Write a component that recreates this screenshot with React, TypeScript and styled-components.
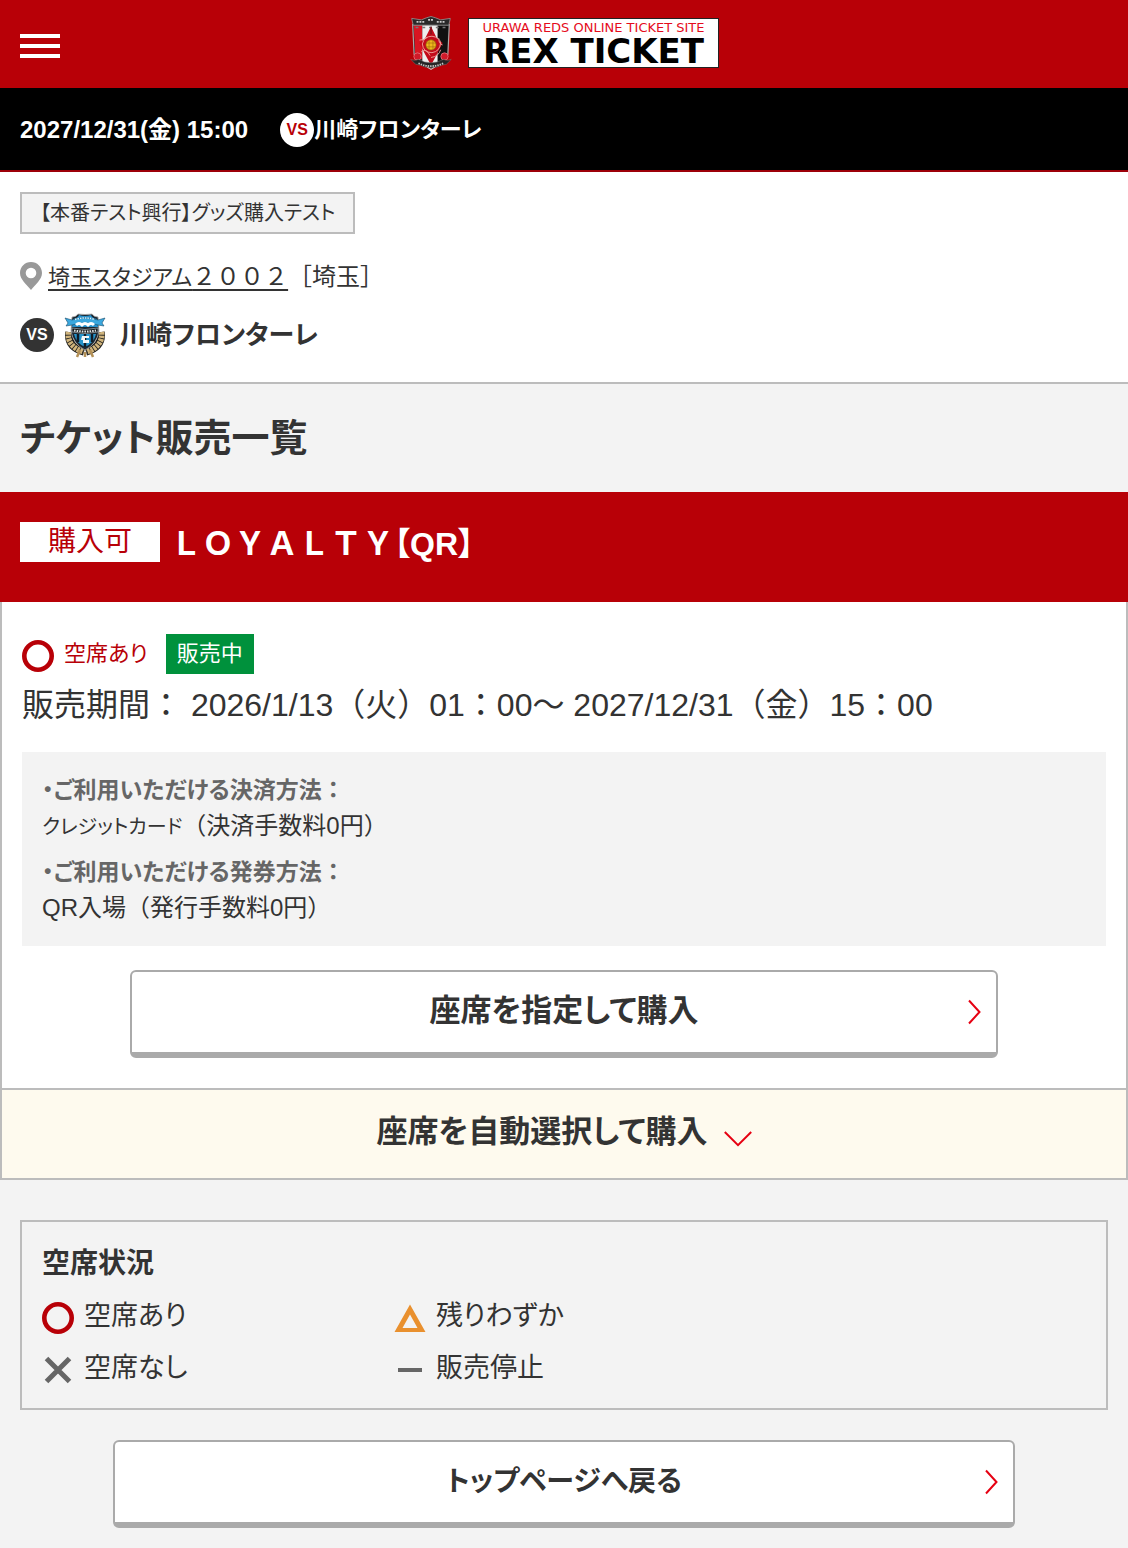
import React from "react";
import styled, { createGlobalStyle } from "styled-components";

const red = "#b80007";
const text = "#333";
const line = "#bcbcbc";
const pale = "#f3f3f3";

const GlobalStyle = createGlobalStyle`
  *, *::before, *::after { box-sizing: border-box; }
  body {
    margin: 0;
    background: ${pale};
    color: ${text};
    font-family: "Liberation Sans", "Noto Sans CJK JP", sans-serif;
    font-size: 24px;
    line-height: 36px;
  }
  h1, h2, h3, p, dl, dd, ul { margin: 0; padding: 0; }
  button { font-family: inherit; line-height: inherit; color: inherit; cursor: pointer; }
  svg { display: block; flex: none; }
`;

/* Proportional kana and brackets */
const Prop = styled.span<{ $size?: number }>`
  font-feature-settings: "palt";
  font-size: ${(p) => (p.$size ? `${p.$size}px` : "inherit")};
  line-height: ${(p) => (p.$size ? 1 : "inherit")};
`;

const Header = styled.header`
  display: grid;
  grid-template-columns: 1fr auto 1fr;
  align-items: center;
  height: 88px;
  padding: 0 20px;
  background: ${red};
`;

const MenuButton = styled.button`
  display: flex;
  flex-direction: column;
  gap: 6px;
  width: 40px;
  margin-top: 4px;
  padding: 0;
  border: 0;
  background: none;
`;

const MenuBar = styled.span`
  height: 4px;
  background: #fff;
`;

const Brand = styled.a`
  display: flex;
  align-items: center;
  gap: 15px;
  padding-bottom: 2px;
  color: #000;
  text-decoration: none;
`;

const BrandPlate = styled.span`
  display: flex;
  flex-direction: column;
  align-items: center;
  justify-content: center;
  width: 251px;
  height: 50px;
  border: 1px solid #222;
  background: #fff;
  font-family: "DejaVu Sans", sans-serif;
  white-space: nowrap;
`;

const BrandSmall = styled.span`
  font-size: 13px;
  line-height: 16px;
  color: #e50b1c;
`;

const BrandLarge = styled.span`
  font-size: 34px;
  font-weight: bold;
  line-height: 30px;
`;

const MatchBar = styled.div`
  display: flex;
  align-items: center;
  gap: 32px;
  height: 84px;
  padding: 2px 20px 0;
  border-bottom: 2px solid #9d0009;
  background: #000;
  color: #fff;
  font-weight: bold;
`;

const Opponent = styled.span`
  display: flex;
  align-items: center;
`;

const Versus = styled.span<{ $bg: string; $fg: string }>`
  flex: none;
  width: 34px;
  height: 34px;
  border-radius: 50%;
  background: ${(p) => p.$bg};
  color: ${(p) => p.$fg};
  font-size: 16px;
  font-weight: bold;
  line-height: 34px;
  text-align: center;
`;

const EventInfo = styled.section`
  padding: 20px 20px 24px;
  border-bottom: 2px solid ${line};
  background: #fff;
`;

const EventTag = styled.p`
  width: fit-content;
  padding: 0 18px;
  border: 2px solid ${line};
  background: ${pale};
  font-size: 20px;
  line-height: 38px;
`;

const Venue = styled.div`
  display: flex;
  align-items: center;
  gap: 6px;
  height: 34px;
  margin-top: 26px;
`;

const VenueLink = styled.a`
  color: ${text};
  text-decoration: underline;
  text-decoration-thickness: 2px;
  text-underline-offset: 4px;
`;

const Team = styled.div`
  display: flex;
  align-items: center;
  gap: 10px;
  height: 46px;
  margin-top: 18px;
`;

const TeamName = styled.h2`
  padding-left: 4px;
  font-size: 26px;
  line-height: 40px;
`;

const PageTitle = styled.h1`
  padding: 30px 20px;
  font-size: 38px;
  line-height: 48px;
`;

const SaleHeader = styled.div`
  display: flex;
  align-items: center;
  gap: 10px;
  height: 110px;
  padding: 0 20px 10px;
  background: ${red};
  color: #fff;
`;

const Buyable = styled.span`
  width: 140px;
  background: #fff;
  color: ${red};
  font-size: 28px;
  line-height: 40px;
  text-align: center;
`;

const SaleName = styled.h2`
  padding-top: 4px;
  font-size: 32px;
  line-height: 40px;
`;

const SaleBody = styled.div`
  display: flex;
  flex-direction: column;
  padding: 32px 20px 30px;
  border: solid ${line};
  border-width: 0 2px;
  background: #fff;
`;

const Status = styled.div`
  display: flex;
  align-items: center;
  gap: 10px;
`;

const StatusText = styled.span`
  padding-right: 8px;
  color: ${red};
  font-size: 22px;
`;

const OnSale = styled.span`
  width: 88px;
  background: #00913c;
  color: #fff;
  font-size: 22px;
  line-height: 40px;
  text-align: center;
`;

const Period = styled.p`
  margin-top: 8px;
  font-size: 32px;
  line-height: 46px;
`;

const Methods = styled.dl`
  display: flex;
  flex-direction: column;
  gap: 10px;
  margin: 24px 0;
  padding: 20px;
  background: ${pale};
`;

const MethodName = styled.dt`
  color: #666;
  font-size: 23px;
  font-weight: bold;
`;

const WideButton = styled.button`
  display: flex;
  align-items: center;
  width: 80%;
  height: 88px;
  margin: 0 auto;
  padding: 0 14px 0 28px;
  border: 2px solid #aaa;
  border-bottom-width: 6px;
  border-radius: 6px;
  background: #fff;
  font-size: 31px;
  font-weight: bold;
`;

const ButtonText = styled.span`
  flex: 1;
  padding-bottom: 2px;
  text-align: center;
`;

const AutoSelect = styled.button`
  display: flex;
  align-items: center;
  justify-content: center;
  gap: 16px;
  width: 100%;
  height: 92px;
  padding: 0 0 4px;
  border: 2px solid ${line};
  background: #fefaee;
  font-size: 31px;
  font-weight: bold;
`;

const Lower = styled.div`
  padding: 40px 0 20px;
`;

const Legend = styled.section`
  margin: 0 20px 30px;
  padding: 22px 20px 18px;
  border: 2px solid ${line};
`;

const LegendTitle = styled.h3`
  font-size: 28px;
  line-height: 40px;
`;

const LegendList = styled.ul`
  display: grid;
  grid-template-columns: repeat(3, 1fr);
  gap: 8px 12px;
  margin-top: 10px;
  list-style: none;
`;

const LegendItem = styled.li<{ $column: number }>`
  display: flex;
  grid-column: ${(p) => p.$column};
  align-items: center;
  gap: 10px;
  font-size: 27px;
  line-height: 44px;
  white-space: nowrap;
`;

const StatusIcon = styled.svg`
  width: 32px;
  height: 32px;
  margin-top: 4px;
`;

type Kind = "open" | "few" | "none" | "stopped";

function Mark({ kind }: { kind: Kind }) {
  return (
    <StatusIcon viewBox="0 0 32 32" fill="none" aria-hidden="true">
      {kind === "open" && <circle cx="16" cy="16" r="13.7" stroke={red} strokeWidth="4.6" />}
      {kind === "few" && (
        <path fillRule="evenodd" fill="#e9902e" d="M16 2.500 31.500 30H.5ZM16 12.500 8.500 26h15Z" />
      )}
      {kind === "none" && <path d="M4.500 4.500 27.500 27.500M27.500 4.500 4.500 27.500" stroke="#666" strokeWidth="5" />}
      {kind === "stopped" && <path d="M4 16h24" stroke="#666" strokeWidth="4" />}
    </StatusIcon>
  );
}

const legend: { kind: Kind; label: string; column: number }[] = [
  { kind: "open", label: "空席あり", column: 1 },
  { kind: "few", label: "残りわずか", column: 2 },
  { kind: "none", label: "空席なし", column: 1 },
  { kind: "stopped", label: "販売停止", column: 2 },
];

function ChevronRight() {
  return (
    <svg width="14" height="26" viewBox="0 0 14 26" fill="none" aria-hidden="true">
      <path d="m1 1.500 10.500 11.500L1 24.500" stroke="#e60012" strokeWidth="2" />
    </svg>
  );
}

function ChevronDown() {
  return (
    <svg width="28" height="34" viewBox="0 0 28 34" fill="none" aria-hidden="true">
      <path d="m.8 17 13.200 13.200 13.200-13.200" stroke="#e60012" strokeWidth="2" />
    </svg>
  );
}

function Pin() {
  return (
    <svg width="22" height="30" viewBox="0 0 22 30" aria-hidden="true">
      <path
        fillRule="evenodd"
        fill="#999"
        d="M11 0C4.900 0 0 4.900 0 11c0 6.500 6.800 11.600 11 17 4.200-5.400 11-10.500 11-17C22 4.900 17.100 0 11 0Zm0 5.700a5.300 5.300 0 1 1 0 10.600 5.300 5.300 0 0 1 0-10.600Z"
      />
    </svg>
  );
}

function RedsCrest() {
  return (
    <svg width="44" height="54" viewBox="0 0 44 56" aria-hidden="true">
      <path d="M3 9h38l-1.500 31Q36 48 22 54 8 48 4.500 40Z" fill="#222" />
      <path d="M4 9h9v36Q6 42 5.500 38Z" fill="#d91522" />
      <path d="M13 9h16v41l-7 4-9-6Z" fill="#eee" />
      <path d="M29 9h11l-1.500 30Q36 45 29 49Z" fill="#111" />
      <path d="M3 9h38l-1.500 31Q36 48 22 54 8 48 4.500 40Z" fill="none" stroke="#aaa" strokeWidth="1.200" />
      <path d="M2 2.500 12 4l5-2q5-3 10 0l5 2 10-1.500-1.500 7h-37Z" fill="#292929" stroke="#999" strokeWidth=".8" />
      <path d="M7 6h9m3-2h6m3 2h9" stroke="#ccc" strokeWidth="1.800" strokeDasharray="2 1" />
      <path d="M6 12h32" stroke="#777" strokeWidth="1.500" strokeDasharray="3 4" />
      <path d="m22 11 6 12 6 5-6 12-6 11-6-11-6-12 6-5Z" fill="#c30b1b" />
      <path d="M22 11v8" stroke="#5b151a" strokeWidth="1" />
      <path d="M13 29q2-8 10-8 8 1 9 7-1 9-9 10-9 0-10-9Zm-3-4q6 0 8-3m12 1q0 6 4 7M12 37q5-4 9 4m1 2q8-1 10-8" fill="none" stroke="#ed9c96" strokeWidth="1" />
      <circle cx="22" cy="30" r="5.300" fill="#eeb61c" stroke="#8d5b0b" strokeWidth=".7" />
      <path d="M17 28h10m-10 4h10m-7-7v10m4-10v10" stroke="#9b660c" strokeWidth=".6" />
      <circle cx="8" cy="42" r="3.800" fill="#d01a29" stroke="#e87982" strokeWidth=".8" />
      <circle cx="36" cy="42" r="3.800" fill="#d01a29" stroke="#e87982" strokeWidth=".8" />
      <path d="M1 45q4 2 8 0 13 7 26 0 4 2 8 0l-5 5-5 1q-11 6-22 0l-5-1Z" fill="#252525" stroke="#777" strokeWidth=".5" />
      <path d="M9 49q13 6 26 0" fill="none" stroke="#c8c8c8" strokeWidth="1.800" strokeDasharray="1.500 1" />
      <path d="m18 53 4 2.500 4-2.500" fill="none" stroke="#ccc" />
    </svg>
  );
}

function FrontaleCrest() {
  return (
    <svg width="42" height="46" viewBox="0 0 42 46" aria-hidden="true">
      <g fill="none" stroke="#20201e" strokeWidth="7.500">
        <path d="M5 20q-2 15 15 20M37 20q2 15-15 20" />
      </g>
      <g fill="none" stroke="#d0b47c" strokeWidth="5.500" strokeDasharray="2.600 .8">
        <path d="M4.500 20q-2 14 15 20M37.500 20q2 14-15 20" />
      </g>
      <path d="m16 38-3 7m13-7 3 7m-8-5v5" stroke="#b49157" strokeWidth="2.500" />
      <path d="M8 5q4 0 6-3 7 1 14 0 2 3 6 3l1 14q-2 13-14 19Q9 32 7 19Z" fill="#1c2730" stroke="#aaa" strokeWidth=".8" />
      <path d="M9 7q5-1 6-4 6 2 12 0 1 3 6 4l1 8H8Z" fill="#2790cb" />
      <path d="m1 6 7 2q13-4 26 0l7-2-3 5 2 3-6-1q-13-4-26 0l-6 1 2-3Z" fill="#3ba8df" stroke="#154c6c" strokeWidth=".6" />
      <path d="M11 7.500q10-3 20 0" fill="none" stroke="#d9eff8" strokeWidth="1.500" strokeDasharray="1.500 1" />
      <path d="M12 13q3-3 6 0 3-3 6 0 3-3 6 0" fill="none" stroke="#fff" strokeWidth="3" />
      <path d="M8 16q13 3 26 0v4q-13 3-26 0Z" fill="#161a1c" stroke="#bdc8cc" strokeWidth=".6" />
      <path d="M10 18.500q11 2 22 0" fill="none" stroke="#dde4e6" strokeWidth="2" strokeDasharray="1.600 1" />
      <path d="M10 22h22q-2 9-11 13-9-4-11-13Z" fill="#2693ca" />
      <path d="M14 22v8m14-8v8m-7-8v13" stroke="#101c27" strokeWidth="2.500" />
      <path d="M18 24h7v2h-4v2h4v3h-6v-3h-2Z" fill="#f4f7f8" />
    </svg>
  );
}

export default function App() {
  return (
    <>
      <GlobalStyle />
      <Header>
        <MenuButton type="button" aria-label="メニュー">
          <MenuBar />
          <MenuBar />
          <MenuBar />
        </MenuButton>
        <Brand href="#">
          <RedsCrest />
          <BrandPlate>
            <BrandSmall>URAWA REDS ONLINE TICKET SITE</BrandSmall>
            <BrandLarge>REX TICKET</BrandLarge>
          </BrandPlate>
        </Brand>
      </Header>

      <MatchBar>
        <span>2027/12/31(金) 15:00</span>
        <Opponent>
          <Versus $bg="#fff" $fg={red}>VS</Versus>
          <Prop $size={22}>川崎フロンターレ</Prop>
        </Opponent>
      </MatchBar>

      <main>
        <EventInfo>
          <EventTag><Prop>【本番テスト興行】グッズ購入テスト</Prop></EventTag>
          <Venue>
            <Pin />
            <span>
              <VenueLink href="#"><Prop $size={22}>埼玉スタジアム</Prop>２００２</VenueLink>［埼玉］
            </span>
          </Venue>
          <Team>
            <Versus $bg="#333" $fg="#fff">VS</Versus>
            <FrontaleCrest />
            <TeamName><Prop>川崎フロンターレ</Prop></TeamName>
          </Team>
        </EventInfo>

        <PageTitle><Prop>チケット販売一覧</Prop></PageTitle>

        <section>
          <SaleHeader>
            <Buyable>購入可</Buyable>
            <SaleName>ＬＯＹＡＬＴＹ<Prop>【QR】</Prop></SaleName>
          </SaleHeader>
          <SaleBody>
            <Status>
              <Mark kind="open" />
              <StatusText><Prop>空席あり</Prop></StatusText>
              <OnSale>販売中</OnSale>
            </Status>
            <Period>販売期間： 2026/1/13（火）01：00～ 2027/12/31（金）15：00</Period>
            <Methods>
              <div>
                <MethodName><Prop>・ご利用いただける決済方法</Prop>：</MethodName>
                <dd><Prop $size={20}>クレジットカード</Prop>（決済手数料0円）</dd>
              </div>
              <div>
                <MethodName><Prop>・ご利用いただける発券方法</Prop>：</MethodName>
                <dd>QR入場（発行手数料0円）</dd>
              </div>
            </Methods>
            <WideButton type="button">
              <ButtonText><Prop>座席を指定して購入</Prop></ButtonText>
              <ChevronRight />
            </WideButton>
          </SaleBody>
          <AutoSelect type="button" aria-expanded="false">
            <Prop>座席を自動選択して購入</Prop>
            <ChevronDown />
          </AutoSelect>
        </section>

        <Lower>
          <Legend>
            <LegendTitle>空席状況</LegendTitle>
            <LegendList>
              {legend.map((item) => (
                <LegendItem key={item.kind} $column={item.column}>
                  <Mark kind={item.kind} />
                  <Prop>{item.label}</Prop>
                </LegendItem>
              ))}
            </LegendList>
          </Legend>
          <WideButton type="button">
            <ButtonText><Prop $size={28}>トップページへ戻る</Prop></ButtonText>
            <ChevronRight />
          </WideButton>
        </Lower>
      </main>
    </>
  );
}
